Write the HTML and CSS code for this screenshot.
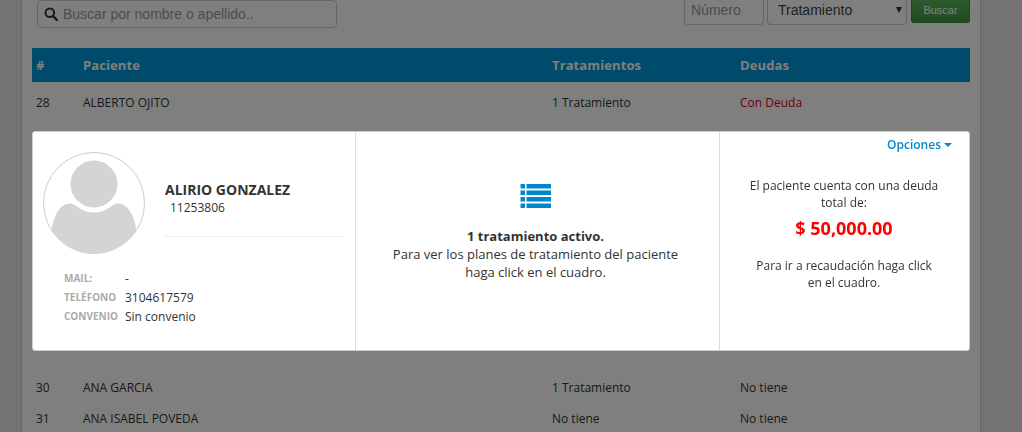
FILE: index.html
```html
<!DOCTYPE html>
<html lang="es">
<head>
<meta charset="utf-8">
<title>Pacientes</title>
<link rel="stylesheet" href="styles.css">
</head>
<body>
<div class="shell">
  <main class="content">
    <div class="filters">
      <label class="search">
        <svg class="search-icon" viewBox="0 0 14 14" width="14" height="14"><circle cx="5.8" cy="5.8" r="4.3" fill="none" stroke="currentColor" stroke-width="2"/><path d="M9 9l3.8 3.8" stroke="currentColor" stroke-width="2.4" stroke-linecap="round"/></svg>
        <span>Buscar por nombre o apellido..</span>
      </label>
      <div class="filter-right">
        <div class="field number">Número</div>
        <div class="field select">Tratamiento<span class="select-arrow"></span></div>
        <div class="btn-search">Buscar</div>
      </div>
    </div>
    <div class="thead">
      <div>#</div><div>Paciente</div><div>Tratamientos</div><div>Deudas</div>
    </div>
    <div class="row first"><div>28</div><div>ALBERTO OJITO</div><div>1 Tratamiento</div><div class="debt">Con Deuda</div></div>
    <div class="row-hidden"></div>
    <div class="row"><div>30</div><div>ANA GARCIA</div><div>1 Tratamiento</div><div>No tiene</div></div>
    <div class="row"><div>31</div><div>ANA ISABEL POVEDA</div><div>No tiene</div><div>No tiene</div></div>
  </main>
</div>
<div class="overlay"></div>
<section class="modal">
  <div class="col col-patient">
    <div class="patient-top">
      <svg class="avatar" viewBox="0 0 102 102" width="102" height="102">
        <defs><clipPath id="av"><circle cx="51" cy="51" r="50.5"/></clipPath></defs>
        <circle cx="51" cy="51" r="50.5" fill="#fff" stroke="#ccc"/>
        <circle cx="51" cy="32" r="23.5" fill="#d4d4d4"/>
        <path clip-path="url(#av)" d="M8.5 78C11 62 18 51 28 51.5C33 52 38 60.5 51 60.5C64 60.5 69 52 74 51.5C84 51 91 62 93.5 78V102H8.5Z" fill="#d4d4d4"/>
      </svg>
      <div class="identity">
        <div class="name">ALIRIO GONZALEZ</div>
        <div class="doc">11253806</div>
        <div class="divider"></div>
      </div>
    </div>
    <dl class="details">
      <dt>MAIL:</dt><dd>-</dd>
      <dt>TELÉFONO</dt><dd>3104617579</dd>
      <dt>CONVENIO</dt><dd>Sin convenio</dd>
    </dl>
  </div>
  <div class="col col-treat">
    <svg class="list-icon" viewBox="0 0 31 24" width="31" height="24" fill="#0088cc">
      <rect x="0.5" y="0" width="4.5" height="4.5"/><rect x="6.5" y="0" width="24.5" height="4.5"/>
      <rect x="0.5" y="6.5" width="4.5" height="4.5"/><rect x="6.5" y="6.5" width="24.5" height="4.5"/>
      <rect x="0.5" y="13" width="4.5" height="4.5"/><rect x="6.5" y="13" width="24.5" height="4.5"/>
      <rect x="0.5" y="19.5" width="4.5" height="4.5"/><rect x="6.5" y="19.5" width="24.5" height="4.5"/>
    </svg>
    <p class="treat-text"><b>1 tratamiento activo.</b><br>Para ver los planes de tratamiento del paciente<br>haga click en el cuadro.</p>
  </div>
  <div class="col col-debt">
    <div class="options">Opciones<span class="caret"></span></div>
    <p class="debt-text">El paciente cuenta con una deuda<br>total de:</p>
    <div class="amount">$ 50,000.00</div>
    <p class="debt-text go">Para ir a recaudación haga click<br>en el cuadro.</p>
  </div>
</section>
</body>
</html>
```
FILE: styles.css
```css
* { box-sizing: border-box; }
html, body { margin: 0; height: 432px; overflow: hidden; }
body { background: #e7e7e7; font-family: "Open Sans", sans-serif; font-size: 12px; color: #333; }
.shell { margin: 0 41px 0 21px; height: 432px; background: #fff; border-left: 1px solid #ccc; border-right: 1px solid #ccc; }
.content { padding: 0 10px 0 10px; }
.filters { display: flex; justify-content: space-between; align-items: flex-start; padding-left: 5px; height: 48px; }
.search { display: flex; align-items: center; gap: 5px; width: 300px; height: 28px; padding-left: 6px; border: 1px solid #ccc; border-radius: 4px; font-family: "Liberation Sans", sans-serif; font-size: 14px; color: #999; }
.search-icon { color: #333; flex: none; }
.filter-right { display: flex; align-items: flex-start; }
.field { height: 25px; border: 1px solid #ccc; border-top: 0; border-radius: 0 0 4px 4px; font-family: "Liberation Sans", sans-serif; font-size: 14px; line-height: 21px; padding-left: 6px; }
.number { width: 80px; color: #999; margin-right: 3px; }
.select { width: 140px; padding-left: 10px; color: #444; position: relative; margin-right: 4px; }
.select-arrow { position: absolute; right: 4px; top: 7px; border: 3.5px solid transparent; border-top: 6px solid #333; border-bottom: 0; }
.btn-search { width: 59px; height: 23px; background: linear-gradient(#5cb85c, #419641); border: 1px solid #3e8f3e; border-top: 0; border-radius: 0 0 3px 3px; color: #fff; font-family: "Liberation Sans", sans-serif; font-size: 11px; line-height: 21px; text-align: center; }
.thead, .row { display: grid; grid-template-columns: 47px 469px 188px 1fr; padding-left: 4px; }
.thead { height: 34px; align-items: center; background: #0094d6; color: #fff; font-size: 13px; font-weight: 700; letter-spacing: .1px; border-bottom: 1px solid #0088c6; }
.row { height: 31px; align-items: center; }
.row.first { margin-top: 5px; }
.row-hidden { height: 254px; }
.debt { color: #d9001b; }
.overlay { position: fixed; inset: 0; background: rgba(0,0,0,.5); }
.modal { position: fixed; left: 32px; top: 131px; width: 938px; height: 220px; display: grid; grid-template-columns: 323px 364px 1fr; background: #fff; border: 1px solid #ccc; border-radius: 3px; color: #333; }
.col { position: relative; border-right: 1px solid #ddd; }
.col:last-child { border-right: 0; }
.col-patient { padding: 20px 11px 0 10px; }
.patient-top { display: flex; gap: 20px; }
.avatar { flex: none; }
.identity { flex: 1; padding-top: 28px; }
.name { font-size: 14px; font-weight: 700; line-height: 19px; color: #333; }
.doc { padding-left: 5px; font-size: 12px; line-height: 17px; }
.divider { margin-top: 20px; border-top: 1px solid #eee; }
.details { display: grid; grid-template-columns: 61px 1fr; grid-auto-rows: 19px; align-items: center; margin: 14px 0 0 21px; }
.details dt { font-size: 10px; font-weight: 700; color: #aaa; }
.details dd { margin: 0; padding-top: 1px; font-size: 12px; }
.col-treat { padding: 52px 4px 0 0; text-align: center; }
.list-icon { display: block; margin: 0 auto; }
.treat-text { margin: 19px 0 0; font-size: 13px; line-height: 18px; }
.col-debt { padding: 45px 1px 0 0; text-align: center; font-size: 12px; }
.options { position: absolute; top: 4px; right: 17px; font-size: 12px; font-weight: 600; line-height: 17px; color: #0088cc; display: flex; align-items: center; gap: 3px; }
.caret { border: 4px solid transparent; border-top-color: #0088cc; border-bottom: 0; }
.debt-text { margin: 0; line-height: 17px; }
.amount { margin-top: 5px; font-size: 18px; font-weight: 700; line-height: 24px; color: #f00; }
.debt-text.go { margin-top: 17px; }
```
